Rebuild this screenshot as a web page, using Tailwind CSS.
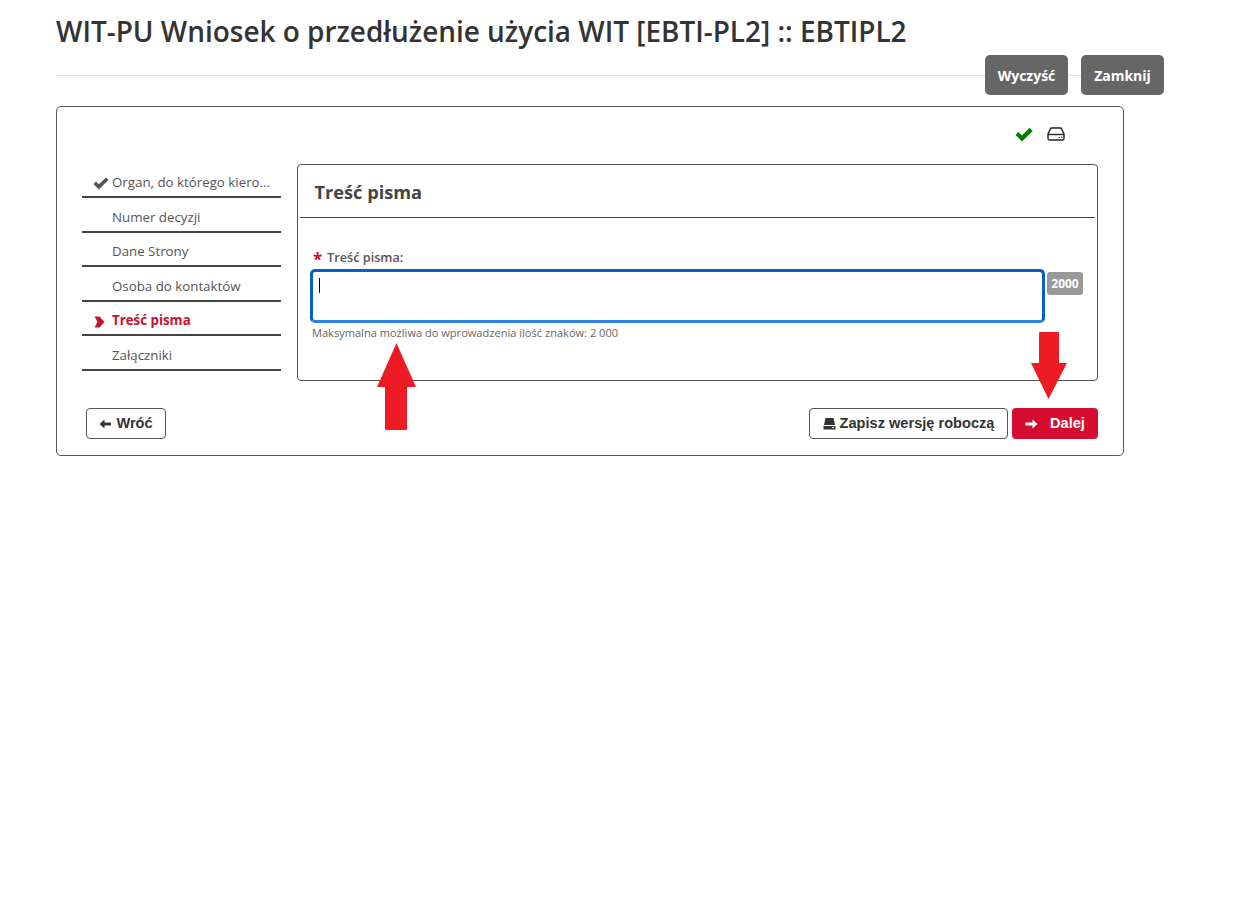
<!DOCTYPE html>
<html lang="pl">
  <head>
    <meta charset="UTF-8" />
    <title>WIT-PU Wniosek</title>
    <script src="https://cdn.jsdelivr.net/npm/@tailwindcss/browser@4"></script>
  </head>
  <body class="bg-white relative min-h-screen font-['Open_Sans',sans-serif] text-[#333]">
    <div class="w-[1108px] ml-[56px]">
      <div class="h-[76px] border-b border-[#ddd]">
        <h1 class="pt-[12px] text-[27.930px] leading-[38px] font-semibold text-[#333]">WIT-PU Wniosek o przedłużenie użycia WIT [EBTI-PL2] :: EBTIPL2</h1>
      </div>
      <div class="-mt-[21px] flex justify-end gap-[13px]">
        <button class="w-[83px] h-[40px] rounded-[5px] bg-[#666] text-white text-[14px] font-bold">Wyczyść</button>
        <button class="w-[83px] h-[40px] rounded-[5px] bg-[#666] text-white text-[14px] font-bold">Zamknij</button>
      </div>
    </div>

    <div class="ml-[56px] mt-[11px] w-[1068px] h-[350px] border border-[#555] rounded-[5px] pt-[17px] px-[25px]">
      <div class="flex justify-end items-center gap-[14px] h-[20px] pr-[33px]">
        <svg class="w-[18px] h-[15px]" viewBox="0 0 18 15"><path d="M0.500 8l3-3 3.500 3.500L14.500 0.800 17.800 4 7 14.500z" fill="#008000"/></svg>
        <svg class="w-[18px] h-[14px]" viewBox="0 0 18 14" fill="none" stroke="#222" stroke-width="1.4"><path d="M4 1h10l3 6v4.500a1.500 1.500 0 0 1-1.500 1.500h-13A1.500 1.500 0 0 1 1 11.500V7z"/><path d="M1 7.500h16"/><path d="M11.500 10.300h1.500M14 10.300h1.500" stroke-width="1"/></svg>
      </div>
      <div class="mt-[20px] flex gap-[16px]">
        <ul class="w-[199px] -mt-[0.5px] text-[13.3px] text-[#555]">
          <li class="relative h-[34.500px] border-b-2 border-[#444] pl-[30px] pt-[8.500px] leading-[20px]">
            <svg class="absolute left-[11px] top-[13px] w-[16px] h-[13px]" viewBox="0 0 16 13"><path d="M0.500 7l2.500-2.500 2.800 2.800L13 0.500 15.500 3 5.800 12.500z" fill="#555"/></svg>
            Organ, do którego kiero...
          </li>
          <li class="h-[34.500px] border-b-2 border-[#444] pl-[30px] pt-[8.500px] leading-[20px]">Numer decyzji</li>
          <li class="h-[34.500px] border-b-2 border-[#444] pl-[30px] pt-[8.500px] leading-[20px]">Dane Strony</li>
          <li class="h-[34.500px] border-b-2 border-[#444] pl-[30px] pt-[8.500px] leading-[20px]">Osoba do kontaktów</li>
          <li class="relative h-[34.500px] border-b-2 border-[#444] pl-[30px] pt-[8.500px] leading-[20px] font-bold text-[#c8102e]">
            <svg class="absolute left-[12px] top-[14px] w-[11px] h-[12px]" viewBox="0 0 11 12"><path d="M0.500 0.500h5L10.500 6l-5 5.500h-5L3.500 6z" fill="#c8102e"/></svg>
            Treść pisma
          </li>
          <li class="h-[34.500px] border-b-2 border-[#444] pl-[30px] pt-[8.500px] leading-[20px]">Załączniki</li>
        </ul>
        <div class="w-[801px] h-[217px] border border-[#555] rounded-[4px] px-[2px]">
          <div class="h-[53px] border-b border-[#444] pl-[14.500px] pt-[14px] text-[18.200px] leading-[26px] font-bold text-[#444]">Treść pisma</div>
          <div class="pl-[10px] pt-[31px]">
            <label class="flex items-center h-[18px] pl-[3px] text-[12.700px] font-semibold text-[#555]"><span class="text-[#c8102e] text-[17px] font-bold w-[14px] leading-[18px] pt-[3px]">*</span>Treść pisma:</label>
            <div class="flex items-start gap-[2px] mt-[2px]">
              <div class="relative w-[735px] h-[54px] rounded-[5px] border-[3px] border-[#0a5fc4] border-b-[#2f82e0]">
                <div class="absolute left-[6px] top-[6px] w-px h-[15px] bg-black"></div>
              </div>
              <span class="mt-[3px] w-[36px] h-[23px] rounded-[3px] bg-[#999] text-white text-[12px] font-bold leading-[23px] text-center">2000</span>
            </div>
            <p class="mt-[3px] pl-[2px] text-[11.070px] leading-[14px] text-[#666]">Maksymalna możliwa do wprowadzenia ilość znaków: 2 000</p>
          </div>
        </div>
      </div>
      <div class="mt-[27px] flex items-center font-['Liberation_Sans',sans-serif] text-[14.600px] font-bold">
        <button class="ml-[4px] w-[80px] h-[31px] border border-[#555] rounded-[4px] flex items-center justify-center gap-[5px] text-[#333]">
          <svg class="w-[12px] h-[10px]" viewBox="0 0 12 10"><path d="M5.500 0.500v3H12v3H5.500v3L0.500 5z" fill="#333"/></svg>
          Wróć
        </button>
        <button class="ml-auto w-[199px] h-[31px] border border-[#555] rounded-[4px] flex items-center justify-center gap-[4px] text-[#333]">
          <svg class="w-[13px] h-[12px]" viewBox="0 0 13 12"><path d="M2.500 0h8L12 7H1z" fill="#333"/><path d="M0.500 8h12v3.500h-12z" fill="#333"/><path d="M9 9.500h2" stroke="#fff"/></svg>
          Zapisz wersję roboczą
        </button>
        <button class="ml-[4px] w-[86px] h-[31px] rounded-[4px] bg-[#d50c30] text-white flex items-center justify-center gap-[12px]">
          <svg class="w-[13px] h-[10px]" viewBox="0 0 13 10"><path d="M7.500 0.500v3H0.500v3h7v3L12.500 5z" fill="#fff"/></svg>
          Dalej
        </button>
      </div>
    </div>

    <!-- red arrows drawn over the screenshot -->
    <svg class="absolute left-[377px] top-[343px] w-[40px] h-[88px]" viewBox="0 0 40 88"><path d="M19.500 0L39 44H30V86a1 1 0 0 1-1 1H9a1 1 0 0 1-1-1V44H0z" fill="#ed1c24"/></svg>
    <svg class="absolute left-[1031px] top-[332px] w-[37px] h-[67px]" viewBox="0 0 37 67"><path d="M9 0H27a1 1 0 0 1 1 1V31H36L17.500 67 0 31H8V1a1 1 0 0 1 1-1z" fill="#ed1c24"/></svg>
  </body>
</html>
